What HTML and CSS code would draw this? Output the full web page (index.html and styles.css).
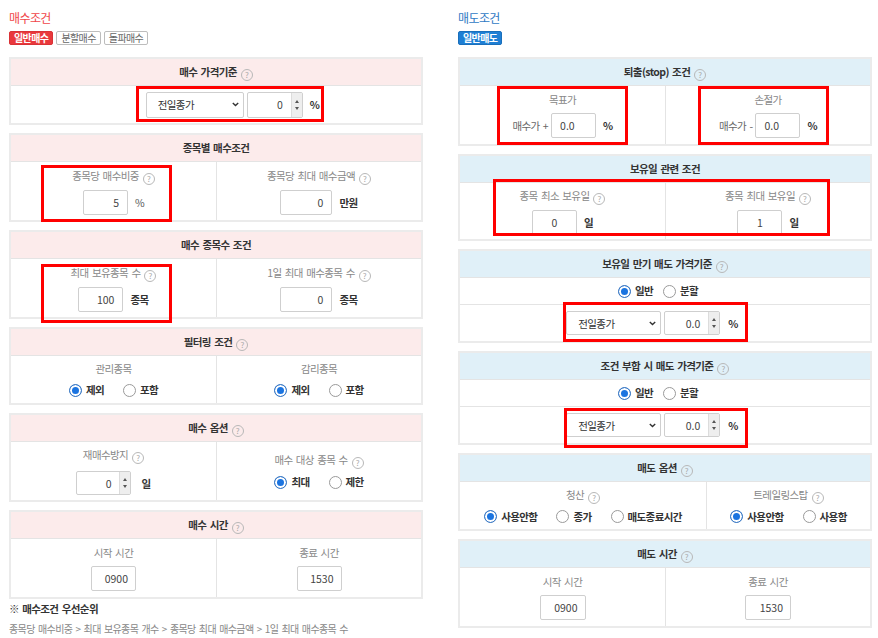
FILE: index.html
```html
<!DOCTYPE html>
<html>
<head>
  <meta charset="utf-8">
  <link rel="stylesheet" href="styles.css">
</head>
<body>
  <div class="page">
    <!-- 매수조건 -->
    <section class="col col-buy">
      <h2 class="col-title">매수조건</h2>
      <div class="tabs">
        <span class="tab tab-on">일반매수</span>
        <span class="tab">분할매수</span>
        <span class="tab">돌파매수</span>
      </div>

      <div class="panel">
        <div class="panel-head">매수 가격기준<span class="help">?</span></div>
        <div class="price-line price-line-buy">
          <div class="select">전일종가<svg width="7" height="5" viewBox="0 0 7 5"><path d="M0.8 1l2.7 2.6L6.2 1" fill="none" stroke="#333" stroke-width="1.4"/></svg></div>
          <div class="spin"><span class="val">0</span><span class="arrows"><i class="up"></i><i class="down"></i></span></div>
          <span class="unit">%</span>
        </div>
        <div class="mark mark-p1"></div>
      </div>

      <div class="panel">
        <div class="panel-head">종목별 매수조건</div>
        <div class="cells">
          <div class="cell">
            <div class="label">종목당 매수비중<span class="help">?</span></div>
            <div class="field-row"><span class="inp w45">5</span><span class="unit unit-light">%</span></div>
          </div>
          <div class="cell">
            <div class="label">종목당 최대 매수금액<span class="help">?</span></div>
            <div class="field-row"><span class="inp w52">0</span><span class="unit">만원</span></div>
          </div>
        </div>
        <div class="mark mark-p2"></div>
      </div>

      <div class="panel">
        <div class="panel-head">매수 종목수 조건</div>
        <div class="cells">
          <div class="cell">
            <div class="label">최대 보유종목 수<span class="help">?</span></div>
            <div class="field-row"><span class="inp w45">100</span><span class="unit">종목</span></div>
          </div>
          <div class="cell">
            <div class="label">1일 최대 매수종목 수<span class="help">?</span></div>
            <div class="field-row"><span class="inp w52">0</span><span class="unit">종목</span></div>
          </div>
        </div>
        <div class="mark mark-p3"></div>
      </div>

      <div class="panel">
        <div class="panel-head">필터링 조건<span class="help">?</span></div>
        <div class="cells cells-short">
          <div class="cell">
            <div class="label">관리종목</div>
            <div class="radios">
              <span class="opt"><i class="radio on"></i>제외</span>
              <span class="opt"><i class="radio"></i>포함</span>
            </div>
          </div>
          <div class="cell">
            <div class="label">감리종목</div>
            <div class="radios">
              <span class="opt"><i class="radio on"></i>제외</span>
              <span class="opt"><i class="radio"></i>포함</span>
            </div>
          </div>
        </div>
      </div>

      <div class="panel">
        <div class="panel-head">매수 옵션<span class="help">?</span></div>
        <div class="cells">
          <div class="cell cell-loose">
            <div class="label">재매수방지<span class="help">?</span></div>
            <div class="field-row">
              <div class="spin spin-sm"><span class="val">0</span><span class="arrows"><i class="up"></i><i class="down"></i></span></div>
              <span class="unit unit-wide">일</span>
            </div>
          </div>
          <div class="cell">
            <div class="label">매수 대상 종목 수<span class="help">?</span></div>
            <div class="radios">
              <span class="opt"><i class="radio on"></i>최대</span>
              <span class="opt"><i class="radio"></i>제한</span>
            </div>
          </div>
        </div>
      </div>

      <div class="panel">
        <div class="panel-head">매수 시간<span class="help">?</span></div>
        <div class="cells">
          <div class="cell">
            <div class="label">시작 시간</div>
            <span class="inp w45 inp-time">0900</span>
          </div>
          <div class="cell">
            <div class="label">종료 시간</div>
            <span class="inp w45 inp-time">1530</span>
          </div>
        </div>
      </div>

      <div class="note">
        <div class="note-title">※ 매수조건 우선순위</div>
        <div class="note-text">종목당 매수비중 &gt; 최대 보유종목 개수 &gt; 종목당 최대 매수금액 &gt; 1일 최대 매수종목 수</div>
      </div>
    </section>

    <!-- 매도조건 -->
    <section class="col col-sell">
      <h2 class="col-title">매도조건</h2>
      <div class="tabs">
        <span class="tab tab-on">일반매도</span>
      </div>

      <div class="panel">
        <div class="panel-head">퇴출(stop) 조건<span class="help">?</span></div>
        <div class="cells">
          <div class="cell">
            <div class="label">목표가</div>
            <div class="field-row"><span class="pre">매수가 +</span><span class="inp w45 inp-left">0.0</span><span class="unit">%</span></div>
          </div>
          <div class="cell">
            <div class="label">손절가</div>
            <div class="field-row"><span class="pre">매수가 -</span><span class="inp w45 inp-left">0.0</span><span class="unit">%</span></div>
          </div>
        </div>
        <div class="mark mark-r1a"></div>
        <div class="mark mark-r1b"></div>
      </div>

      <div class="panel">
        <div class="panel-head">보유일 관련 조건</div>
        <div class="cells cells-r2">
          <div class="cell">
            <div class="label">종목 최소 보유일<span class="help">?</span></div>
            <div class="field-row"><span class="inp w45 inp-center">0</span><span class="unit">일</span></div>
          </div>
          <div class="cell">
            <div class="label">종목 최대 보유일<span class="help">?</span></div>
            <div class="field-row"><span class="inp w45 inp-center">1</span><span class="unit">일</span></div>
          </div>
        </div>
        <div class="mark mark-r2"></div>
      </div>

      <div class="panel">
        <div class="panel-head">보유일 만기 매도 가격기준<span class="help">?</span></div>
        <div class="radio-line">
          <div class="radios radios-tight">
            <span class="opt"><i class="radio on"></i>일반</span>
            <span class="opt"><i class="radio"></i>분할</span>
          </div>
        </div>
        <div class="price-line price-line-sell">
          <div class="select select-sm">전일종가<svg width="7" height="5" viewBox="0 0 7 5"><path d="M0.8 1l2.7 2.6L6.2 1" fill="none" stroke="#333" stroke-width="1.4"/></svg></div>
          <div class="spin spin-sell"><span class="val">0.0</span><span class="arrows"><i class="up"></i><i class="down"></i></span></div>
          <span class="unit">%</span>
        </div>
        <div class="mark mark-r3"></div>
      </div>

      <div class="panel">
        <div class="panel-head">조건 부합 시 매도 가격기준<span class="help">?</span></div>
        <div class="radio-line">
          <div class="radios radios-tight">
            <span class="opt"><i class="radio on"></i>일반</span>
            <span class="opt"><i class="radio"></i>분할</span>
          </div>
        </div>
        <div class="price-line price-line-sell">
          <div class="select select-sm">전일종가<svg width="7" height="5" viewBox="0 0 7 5"><path d="M0.8 1l2.7 2.6L6.2 1" fill="none" stroke="#333" stroke-width="1.4"/></svg></div>
          <div class="spin spin-sell"><span class="val">0.0</span><span class="arrows"><i class="up"></i><i class="down"></i></span></div>
          <span class="unit">%</span>
        </div>
        <div class="mark mark-r4"></div>
      </div>

      <div class="panel">
        <div class="panel-head">매도 옵션<span class="help">?</span></div>
        <div class="cells cells-short cells-options">
          <div class="cell">
            <div class="label">청산<span class="help">?</span></div>
            <div class="radios">
              <span class="opt"><i class="radio on"></i>사용안함</span>
              <span class="opt"><i class="radio"></i>종가</span>
              <span class="opt"><i class="radio"></i>매도종료시간</span>
            </div>
          </div>
          <div class="cell">
            <div class="label">트레일링스탑<span class="help">?</span></div>
            <div class="radios">
              <span class="opt"><i class="radio on"></i>사용안함</span>
              <span class="opt"><i class="radio"></i>사용함</span>
            </div>
          </div>
        </div>
      </div>

      <div class="panel">
        <div class="panel-head">매도 시간<span class="help">?</span></div>
        <div class="cells">
          <div class="cell">
            <div class="label">시작 시간</div>
            <span class="inp w46 inp-time">0900</span>
          </div>
          <div class="cell">
            <div class="label">종료 시간</div>
            <span class="inp w46 inp-time">1530</span>
          </div>
        </div>
      </div>
    </section>
  </div>
</body>
</html>
```

FILE: styles.css
```css
* {
  box-sizing: border-box;
}

body {
  margin: 0;
  padding: 10px 0 0 9px;
  font-family: "Noto Sans CJK KR", "Noto Sans", sans-serif;
  font-size: 10.5px;
  letter-spacing: -0.6px;
  word-spacing: 1.5px;
  color: #333;
  background: #fff;
}

.page {
  display: grid;
  grid-template-columns: 414px 414px;
  column-gap: 35px;
  align-items: start;
}

.col-title {
  margin: 0;
  font-size: 12px;
  font-weight: normal;
  line-height: 16px;
}

.col-buy .col-title {
  color: #f04649;
}

.col-sell .col-title {
  color: #2f79c4;
}

.tabs {
  display: flex;
  gap: 3px;
  margin-top: 5px;
}

.tab {
  height: 14px;
  padding: 0 4px;
  font-size: 10px;
  line-height: 12px;
  border: 1px solid #bdbdbd;
  border-radius: 2px;
  color: #666;
  background: #fff;
}

.col-buy .tab-on {
  background: #e9383c;
  border-color: #d93236;
  color: #fff;
  font-weight: bold;
}

.col-sell .tab-on {
  background: #1f7fd4;
  border-color: #1a6fbb;
  color: #fff;
  font-weight: bold;
}

/* panels */

.panel {
  position: relative;
  margin-top: 8px;
  border: 2px solid #ebebeb;
  background: #fff;
}

.tabs + .panel {
  margin-top: 12px;
}

.panel-head {
  height: 27px;
  line-height: 26px;
  border-bottom: 1px solid #e4e4e4;
  text-align: center;
  font-weight: bold;
  color: #333;
}

.col-buy .panel-head {
  background: #fcebeb;
}

.col-sell .panel-head {
  background: #e0f0f8;
}

.help {
  display: inline-block;
  width: 12px;
  height: 12px;
  margin-left: 4px;
  border: 1px solid #b8b8b8;
  border-radius: 50%;
  color: #a8a8a8;
  font-size: 8px;
  font-weight: normal;
  line-height: 10px;
  letter-spacing: 0;
  text-align: center;
  vertical-align: -2px;
}

.cells {
  display: grid;
  grid-template-columns: 1fr 1fr;
  height: 58px;
}

.cells-r2 {
  height: 56px;
}

.cells-short {
  height: 47px;
}

.cells-options {
  grid-template-columns: 246px 1fr;
}

.cell {
  display: flex;
  flex-direction: column;
  align-items: center;
  justify-content: center;
  gap: 5px;
}

.cell-loose {
  gap: 7px;
}

.cell + .cell {
  border-left: 1px solid #e4e4e4;
}

.label {
  line-height: 16px;
  color: #888;
}

.field-row {
  display: flex;
  align-items: center;
}

.pre {
  margin-right: 3px;
  color: #666;
}

.unit {
  margin-left: 7px;
  font-weight: bold;
  color: #333;
}

.unit-light {
  font-weight: normal;
  color: #555;
}

.unit-wide {
  margin-left: 10px;
}

/* inputs */

.inp {
  display: block;
  height: 25px;
  padding: 0 8px;
  border: 1px solid #cfcfcf;
  border-radius: 2px;
  line-height: 23px;
  letter-spacing: 0;
  color: #444;
  text-align: right;
  background: #fff;
}

.w45 {
  width: 45px;
}

.w46 {
  width: 46px;
}

.w52 {
  width: 52px;
}

.inp-left {
  text-align: left;
}

.inp-center {
  text-align: center;
}

.inp-time {
  padding-right: 7px;
}

.spin {
  display: flex;
  width: 56px;
  height: 26px;
  border: 1px solid #cfcfcf;
  border-radius: 2px;
  overflow: hidden;
  background: #fff;
}

.spin-sm {
  width: 55px;
  height: 24px;
}

.spin-sell {
  height: 24px;
}

.spin .val {
  flex: 1;
  padding-right: 8px;
  letter-spacing: 0;
  color: #444;
  text-align: right;
  align-self: center;
}

.arrows {
  display: flex;
  flex-direction: column;
  align-items: center;
  justify-content: center;
  gap: 4px;
  width: 11px;
  border-left: 1px solid #dcdcdc;
  background: #eeeeee;
}

.arrows i {
  width: 0;
  height: 0;
  border-left: 2px solid transparent;
  border-right: 2px solid transparent;
}

.arrows .up {
  border-bottom: 3px solid #555;
}

.arrows .down {
  border-top: 3px solid #555;
}

.select {
  display: flex;
  align-items: center;
  justify-content: space-between;
  width: 98px;
  height: 26px;
  padding: 0 4px 0 11px;
  border: 1px solid #cfcfcf;
  border-radius: 2px;
  color: #333;
  background: #fff;
}

.select-sm {
  width: 95px;
  height: 24px;
}

.price-line {
  display: flex;
  align-items: center;
  justify-content: center;
  gap: 3px;
}

.price-line .unit {
  margin-left: 4px;
}

.price-line-buy {
  height: 37px;
  padding-left: 33px;
}

.price-line-sell {
  height: 36px;
  padding-right: 26px;
}

.price-line-sell .unit {
  margin-left: 5px;
}

.radio-line {
  display: flex;
  align-items: center;
  justify-content: center;
  height: 27px;
  padding-right: 14px;
  border-bottom: 1px solid #e4e4e4;
}

/* radios */

.radios {
  display: flex;
  align-items: center;
  gap: 19px;
  line-height: 16px;
}

.radios-tight {
  gap: 10px;
}

.opt {
  display: flex;
  align-items: center;
  gap: 4px;
  font-weight: bold;
  color: #333;
}

.radio {
  width: 13px;
  height: 13px;
  border: 1px solid #9a9a9a;
  border-radius: 50%;
  background: #fff;
}

.radio.on {
  border-color: #3c78c0;
  background: #1b74e0;
  box-shadow: inset 0 0 0 2px #fff;
}

/* red highlight boxes drawn over the form */

.mark {
  position: absolute;
  border: 3px solid #ff0000;
  pointer-events: none;
}

.mark-p1 { left: 125px; top: 27px; width: 188px; height: 36px; }
.mark-p2 { left: 30px; top: 30px; width: 131px; height: 57px; }
.mark-p3 { left: 30px; top: 32px; width: 131px; height: 59px; }
.mark-r1a { left: 37px; top: 27px; width: 131px; height: 59px; }
.mark-r1b { left: 238px; top: 27px; width: 131px; height: 59px; }
.mark-r2 { left: 33px; top: 23px; width: 337px; height: 57px; }
.mark-r3 { left: 103px; top: 51px; width: 185px; height: 40px; }
.mark-r4 { left: 104px; top: 55px; width: 184px; height: 40px; }

/* footnote */

.note-title {
  line-height: 20px;
  font-weight: bold;
  color: #333;
}

.note-text {
  line-height: 20px;
  font-size: 10px;
  color: #888;
}
```
